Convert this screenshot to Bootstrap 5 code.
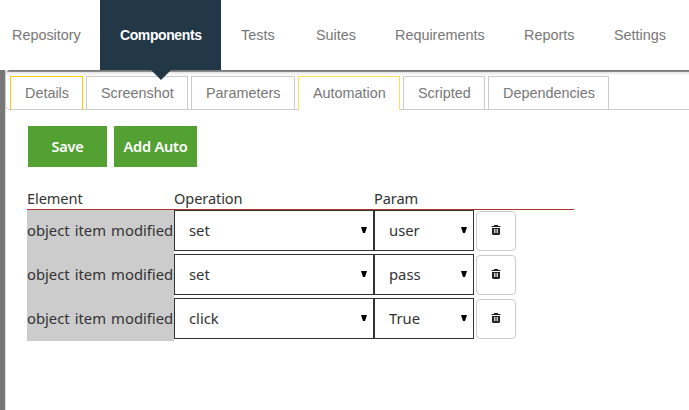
<!DOCTYPE html>
<html lang="en">
<head>
<meta charset="utf-8">
<meta name="viewport" content="width=device-width, initial-scale=1">
<title>Components</title>
<link rel="stylesheet" href="https://cdn.jsdelivr.net/npm/bootstrap@5.3.0/dist/css/bootstrap.min.css">
<style>
body{font-family:"Noto Sans","Open Sans",sans-serif;font-size:15px;color:#333;background:#fff;height:410px;overflow:hidden}
.topbar{height:70px;width:689px;font-family:"Liberation Sans",Arial,sans-serif;font-size:14.4px;z-index:2}
.topbar .nav-link{height:70px;padding:0 0 0 20px;color:#777;white-space:nowrap;line-height:70px}
.topbar .nav-link.active{background:#233847;color:#fff;font-weight:700;font-size:14px;letter-spacing:-.4px}
.topbar .nav-link.active::after{content:"";position:absolute;left:51px;top:70px;border:10px solid transparent;border-top-color:#233847;border-bottom:0}
.w-repo{width:100px}.topbar .w-repo .nav-link{padding-left:12px}
.w-comp{width:121px}.w-tests{width:75px}.w-suites{width:79px}.w-req{width:129px}.w-rep{width:90px}
.workspace{height:340px;background:#777;padding:0 0 0 5px}
.sheet{height:340px;background:#fff;border-left:1px solid #ddd}
.tabstrip{height:40px;padding:6px 0 0 4px;border:1px solid #ccc;border-width:0 0 1px 1px;border-radius:5px 0 0 5px;gap:3px;margin-left:-1px;background:linear-gradient(#777 0,#777 1px,#8b8b8b 1px,#8b8b8b 2px,#ddd 2px,#eee 3px,#fff 6px);font-family:"Liberation Sans",Arial,sans-serif;font-size:14.4px}
.tabstrip .nav-link{height:34px;padding:0 0 0 14px;border:1px solid #ccc;border-radius:0;color:#777;line-height:32px;border-bottom:0;white-space:nowrap}
.tabstrip .nav-link.first-tab{border-color:#fc0}
.tabstrip .nav-link.active{border-color:#fd5;background:#fff;color:#777}
.t1{width:73px}.t2{width:102px}.t3{width:104px}.t4{width:102px}.t5{width:82px}.t6{width:121px}
.actions{padding:16px 0 0 22px;gap:7px}
.btn-go{height:41px;background:#54a133;color:#fff;border:0;border-radius:0;padding:0;font-weight:600;font-size:14.6px;letter-spacing:-.25px;line-height:41px}
.b-save{width:79px}.b-add{width:83px}
.steps{width:547px;margin:22px 0 0 21px}
.steps-head{height:21px;line-height:18px;font-size:14.6px;letter-spacing:-.1px;border-bottom:1px solid #b13434}
.c-el{width:147px;white-space:nowrap}.c-op{width:200px}.c-pa{width:100px}
.step{height:44px}
.step .c-el{background:#ccc;height:44px;line-height:41px;font-size:14.8px;word-spacing:1.2px}
.step:last-child .c-el{height:43px}
.step .form-select{height:41px;border:1px solid #333;border-radius:0;padding:0 0 1px 14px;font-size:14.8px;color:#333;background:#fff url("data:image/svg+xml,%3Csvg xmlns='http://www.w3.org/2000/svg' width='6' height='6'%3E%3Cpath d='M0 0h6L4 6H2z' fill='%23000'/%3E%3C/svg%3E") no-repeat right 6px top 16px/6px 6px}
.btn-del{width:40px;height:40px;margin:1px 0 0 2px;border:1px solid #ccc;border-radius:4px;padding:0;background:#fff;color:#222}
.btn-del svg{display:block;margin:0 auto 1px}
</style>
<script src="https://cdn.jsdelivr.net/npm/bootstrap@5.3.0/dist/js/bootstrap.bundle.min.js"></script>
</head>
<body>
<ul class="nav flex-nowrap topbar position-relative bg-white">
<li class="w-repo"><a class="nav-link" href="#">Repository</a></li>
<li class="w-comp"><a class="nav-link active position-relative" href="#">Components</a></li>
<li class="w-tests"><a class="nav-link" href="#">Tests</a></li>
<li class="w-suites"><a class="nav-link" href="#">Suites</a></li>
<li class="w-req"><a class="nav-link" href="#">Requirements</a></li>
<li class="w-rep"><a class="nav-link" href="#">Reports</a></li>
<li><a class="nav-link" href="#">Settings</a></li>
</ul>
<div class="workspace">
<main class="sheet">
<nav class="nav flex-nowrap tabstrip">
<a class="nav-link first-tab t1" href="#">Details</a>
<a class="nav-link t2" href="#">Screenshot</a>
<a class="nav-link t3" href="#">Parameters</a>
<a class="nav-link active t4" href="#">Automation</a>
<a class="nav-link t5" href="#">Scripted</a>
<a class="nav-link t6" href="#">Dependencies</a>
</nav>
<div class="d-flex actions">
<button class="btn btn-go b-save">Save</button>
<button class="btn btn-go b-add">Add Auto</button>
</div>
<div class="steps">
<div class="d-flex steps-head"><div class="c-el">Element</div><div class="c-op">Operation</div><div class="c-pa">Param</div></div>
<div class="d-flex align-items-start step"><div class="c-el"><span class="item">object item modified</span></div><select class="form-select c-op"><option>set</option></select><select class="form-select c-pa"><option>user</option></select><button class="btn btn-del" aria-label="Delete"><svg width="10" height="11"><path fill="currentColor" fill-rule="evenodd" d="M3 0h4v1h2.5v1h-9V1H3zM1 3h8v6L8 10H2L1 9zM3 4v4h.8V4zM4.6 4v4h.8V4zM6.2 4v4H7V4z"/></svg></button></div>
<div class="d-flex align-items-start step"><div class="c-el"><span class="item">object item modified</span></div><select class="form-select c-op"><option>set</option></select><select class="form-select c-pa"><option>pass</option></select><button class="btn btn-del" aria-label="Delete"><svg width="10" height="11"><path fill="currentColor" fill-rule="evenodd" d="M3 0h4v1h2.5v1h-9V1H3zM1 3h8v6L8 10H2L1 9zM3 4v4h.8V4zM4.6 4v4h.8V4zM6.2 4v4H7V4z"/></svg></button></div>
<div class="d-flex align-items-start step"><div class="c-el"><span class="item">object item modified</span></div><select class="form-select c-op"><option>click</option></select><select class="form-select c-pa"><option>True</option></select><button class="btn btn-del" aria-label="Delete"><svg width="10" height="11"><path fill="currentColor" fill-rule="evenodd" d="M3 0h4v1h2.5v1h-9V1H3zM1 3h8v6L8 10H2L1 9zM3 4v4h.8V4zM4.6 4v4h.8V4zM6.2 4v4H7V4z"/></svg></button></div>
</div>
</main>
</div>
</body>
</html>
